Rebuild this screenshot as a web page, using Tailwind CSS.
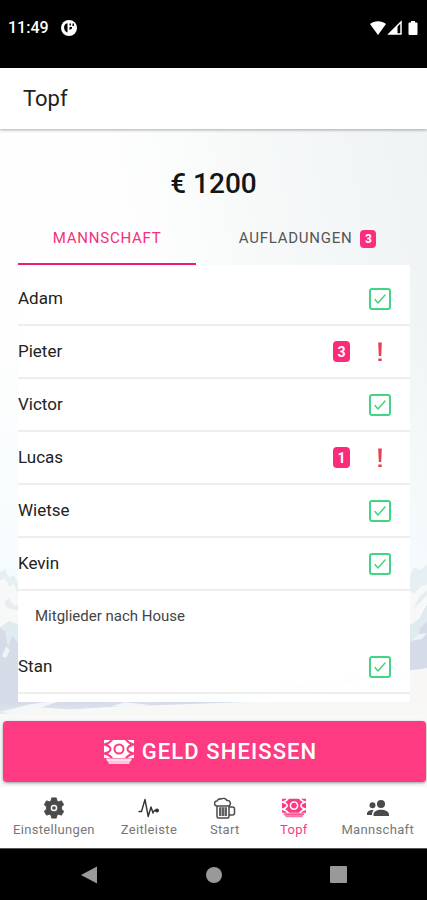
<!DOCTYPE html>
<html lang="de">

<head>
    <meta charset="UTF-8">
    <meta name="viewport" content="width=device-width, initial-scale=1.0">
    <script src="https://cdn.jsdelivr.net/npm/@tailwindcss/browser@4"></script>
    <title>Topf</title>
</head>

<body class="bg-white text-[#222] font-[Roboto,sans-serif] min-h-screen flex flex-col">
    <!-- status bar -->
    <div class="bg-black text-white h-17 px-2 pb-3 flex items-center gap-3">
        <span class="text-base font-medium">11:49</span>
        <svg class="size-4" viewBox="0 0 16 16">
            <circle cx="8" cy="8" r="8" fill="#fff" />
            <path d="M6.500 3.200C3.500 3.800 2.800 6 3.200 8.500S5 12.200 6.500 12.500z" fill="#000" />
            <path d="M8.500 3.500H10v2H8.500zM11.500 3.500H13v2.500h-1.500zM8.500 7H11v1.500L8.500 10z" fill="#000" />
        </svg>
        <div class="ml-auto flex items-center">
            <svg class="w-4 h-4" viewBox="0 0 16 16" fill="#fff"><path d="M0 4C4.500.2 11.500.2 16 4L8 15z" /></svg>
            <svg class="w-4 h-4 ml-px" viewBox="0 0 16 16"><path d="M14 2v12H2z" fill="none" stroke="#fff" stroke-width="1.500" /><path d="M10.500 5.500V14H2z" fill="#fff" /></svg>
            <svg class="w-3 h-4 ml-1" viewBox="0 0 12 16" fill="#fff"><path d="M4 1h4v1.500h1.500q1 0 1 1V14q0 1-1 1h-7q-1 0-1-1V3.500q0-1 1-1H4z" /></svg>
        </div>
    </div>

    <header class="h-[61px] px-[23px] flex items-center bg-white shadow-[0_1px_3px_#00000055] z-10">
        <h1 class="text-[22px]">Topf</h1>
    </header>

    <main class="relative flex-1 flex flex-col">
        <!-- mountain backdrop -->
        <svg class="absolute inset-0 w-full h-full" viewBox="0 0 427 659" preserveAspectRatio="none">
            <defs>
                <linearGradient id="sky" x1="0" y1="0.300" x2="1" y2="0">
                    <stop offset="0.300" stop-color="#fefefe" />
                    <stop offset="1" stop-color="#eef3f3" />
                </linearGradient>
                <linearGradient id="haze" x1="0" y1="0" x2="0" y2="1">
                    <stop offset="0.300" stop-color="#f5fbfd" stop-opacity="0" />
                    <stop offset="0.700" stop-color="#f5fbfd" />
                </linearGradient>
            </defs>
            <rect width="427" height="659" fill="url(#sky)" />
            <rect width="427" height="659" fill="url(#haze)" />
            <path d="M0 444 5 441 9 449 14 447 18 455V510H0zM410 447 414 439 420 442 427 436V520H410z" fill="#e5eff4" />
            <path d="M0 452 5 450 9 458 14 456 18 466V520H0zM410 462 414 466 421 458 427 456V490L410 500z" fill="#f7f8f8" />
            <path d="M4 474 9 470 14 478 18 476V482L8 480zM413 480 420 468 427 462V467L418 476z" fill="#e6edf1" />
            <path d="M0 499 8 504 13 496 18 500V572L150 574 427 540V477L418 493 410 502V573L240 574 110 579 0 586z" fill="#d5dce8" />
            <path d="M0 499 5 503 8 520 12 508 18 514V496L9 493zM410 497 420 490 427 478V493L420 500 418 510 410 514z" fill="#dfebf1" />
            <path d="M2 528 6 518 10 522 6 530zM412 512 419 506 427 505 421 511z" fill="#eef4f6" />
            <path d="M0 588 35 579 90 583 130 579 250 574 410 545 427 540V659H0z" fill="#f8f7f5" />
            <path d="M0 584 30 576 65 571 40 580 20 586zM112 578 125 574 150 577 130 580z" fill="#f3f6f9" />
        </svg>

        <div class="relative">
            <p class="text-[28px] font-medium text-center text-[#151515] h-[89px] pt-9 leading-[38px]">€ 1200</p>

            <div class="flex ml-[18px] mr-2 h-[47px] text-[15px] tracking-wider">
                <button class="flex-4 uppercase text-[#f5307c] border-b-2 border-[#ef1d70] pb-1">Mannschaft</button>
                <button class="flex-5 uppercase text-[#555] flex items-center justify-center gap-2 pb-1.5">
                    Aufladungen
                    <span class="bg-[#fa2e7c] text-white text-xs font-bold tracking-normal rounded w-4 h-[18px] grid place-items-center">3</span>
                </button>
            </div>

            <div class="ml-[18px] mr-[17px] py-2 bg-white/95">
                <ul id="members"></ul>
                <h2 class="h-[50px] pl-[17px] text-[15px] text-[#444] flex items-center">Mitglieder nach House</h2>
                <ul id="house-members"></ul>
            </div>
        </div>

        <div class="relative mt-auto pt-[18px] pb-[5px] pl-[3px] pr-px bg-linear-to-b from-transparent to-[#f7f9f9] to-30%">
            <button class="w-full h-[61px] rounded bg-[#fd3a82] text-white text-[22px] font-medium tracking-wider uppercase flex items-center justify-center gap-2 pr-2 shadow-[0_1px_3px_#00000066]">
                <svg class="w-[30px] h-6" viewBox="0 0 30 24"><use href="#cash" /></svg>
                Geld Sheissen
            </button>
        </div>
    </main>

    <nav class="h-[62px] bg-white flex text-[13px] tracking-wide text-[#777] border-b border-[#555]">
        <a href="#" class="flex-1 px-[13px] pt-2.5 flex flex-col items-center gap-px leading-5">
            <svg class="size-[22px]" viewBox="0 0 24 24" fill="#4a4a4a"><path fill-rule="evenodd" stroke="#4a4a4a" stroke-linejoin="round" d="M9.500 1h5l.7 3.200 1.800 1 3.100-1 2.500 4.300-2.400 2.200v2.600l2.400 2.200-2.500 4.300-3.100-1-1.800 1-.7 3.200h-5l-.7-3.200-1.800-1-3.100 1-2.500-4.300 2.400-2.200v-2.600L1.400 8.500l2.500-4.300 3.100 1 1.800-1zM12 7.800a4.200 4.200 0 1 0 0 8.400 4.200 4.200 0 0 0 0-8.400z" /><circle cx="12" cy="12" r="2" /></svg>
            Einstellungen
        </a>
        <a href="#" class="flex-1 px-[13px] pt-2.5 flex flex-col items-center gap-px leading-5">
            <svg class="size-[22px]" viewBox="0 0 22 22" fill="none" stroke="#333" stroke-width="1.400" stroke-linecap="round" stroke-linejoin="round"><path d="M1 14.500h2.500L7 2.500l3.200 17L13 10l2 6 1.300-2.500H19" /><circle cx="19" cy="13.500" r="1.300" fill="#333" /></svg>
            Zeitleiste
        </a>
        <a href="#" class="flex-1 px-[13px] pt-2.5 flex flex-col items-center gap-px leading-5">
            <svg class="size-[22px]" viewBox="0 0 22 22" fill="none" stroke="#4a4a4a" stroke-width="1.500" stroke-linejoin="round"><path d="M3 9v10.500q0 1.500 1.500 1.500h9q1.500 0 1.500-1.500V9zM15 10h3.500q2 0 2 2v4q0 2-2 2H15" /><path d="M3 9a2.500 2.500 0 0 1 0-5A3.500 3.500 0 0 1 7 2a4.500 4.500 0 0 1 6 1.500A3 3 0 0 1 15 9" /><path d="M5 10h8v9H5z" fill="#aaa" stroke="none" /><path d="M6 10.500v8.500M9 10.500v8.500M12 10.500v8.500" /></svg>
            Start
        </a>
        <a href="#" class="flex-1 px-[13px] pt-2.5 flex flex-col items-center gap-px leading-5 text-[#fb3a82]" aria-current="page">
            <svg class="w-6 h-[22px]" viewBox="0 0 30 24"><use href="#cash" /></svg>
            Topf
        </a>
        <a href="#" class="flex-1 px-[13px] pt-2.5 flex flex-col items-center gap-px leading-5">
            <svg class="size-[22px]" viewBox="0 0 22 22" fill="#4a4a4a"><circle cx="14" cy="7" r="4" /><path d="M6.500 19v-1.500c0-3 3.500-4.700 7.500-4.700s8 1.700 8 4.700V19z" /><circle cx="5.500" cy="8.200" r="3" /><path d="M0 18v-1c0-2.500 2.500-4 6.800-3.900C5.500 14.500 5 16 5 18z" /></svg>
            Mannschaft
        </a>
    </nav>

    <!-- system buttons -->
    <div class="h-[51px] bg-black flex items-center justify-between px-20">
        <button aria-label="Zurück"><svg class="size-[18px]" viewBox="0 0 18 18" fill="#999"><path d="M1 9 17 .5v17z" /></svg></button>
        <button class="size-4 rounded-full bg-[#999]" aria-label="Home"></button>
        <button class="size-[17px] rounded-[1px] bg-[#999]" aria-label="Übersicht"></button>
    </div>

    <svg class="hidden">
        <symbol id="cash" viewBox="0 0 30 24">
            <!-- note with a ring cut out and curved lines running to the corners -->
            <path fill="currentColor" fill-rule="evenodd" d="M9 0h12q1.500 2.500 5 4.500Q22.500 6.500 22.500 9t3.500 4.500q-3.500 2-5 4.500H9q-1.500-2.500-5-4.500Q7.500 11.500 7.500 9T4 4.500Q7.500 2.500 9 0zM15 3.500a5.500 5.500 0 1 0 0 11 5.500 5.500 0 0 0 0-11z" />
            <circle cx="15" cy="9" r="3.500" fill="currentColor" />
            <path fill="currentColor" d="M0 0h6.500Q4 3 0 3.500zM30 0h-6.500Q26 3 30 3.500zM0 18h6.500Q4 15 0 14.500zM30 18h-6.500Q26 15 30 14.500zM0 5.500Q5.500 7 5.500 9T0 12.500zM30 5.500Q24.500 7 24.500 9T30 12.500z" />
            <path fill="currentColor" opacity="0.850" d="M2 18.500h26L27 21H3z" />
            <path fill="currentColor" opacity="0.700" d="M3.500 21h23L25 24H5z" />
        </symbol>
    </svg>

    <script>
        const members = [
            { name: 'Adam', open: 0 },
            { name: 'Pieter', open: 3 },
            { name: 'Victor', open: 0 },
            { name: 'Lucas', open: 1 },
            { name: 'Wietse', open: 0 },
            { name: 'Kevin', open: 0 },
        ];
        const houseMembers = [{ name: 'Stan', open: 0 }];

        const paid = `
            <span class="grid size-[22px] ml-auto">
                <input type="checkbox" checked class="appearance-none col-start-1 row-start-1 size-[22px] rounded-[3px] border-2 border-[#42d583]">
                <svg class="col-start-1 row-start-1 size-[22px] pointer-events-none" viewBox="0 0 22 22" fill="none" stroke="#42d583" stroke-width="1.500" stroke-linecap="round" stroke-linejoin="round"><path d="m6 11.500 3 3.500 7-8" /></svg>
            </span>`;

        const due = (count) => `
            <span class="ml-auto bg-[#fb2b7a] text-white text-sm leading-4 font-bold rounded w-[17px] h-[21px] grid place-items-center">${count}</span>
            <svg class="size-[22px] ml-[19px]" viewBox="0 0 22 22" fill="#e83e4d"><path d="M9.200 1.500h3.600l-.6 13.500H9.800z" /><path d="M9.300 17.500h3.400V20H9.300z" /></svg>`;

        const renderList = (id, list) => {
            document.getElementById(id).innerHTML = list.map(member => `
                <li class="border-b-2 border-[#eee]">
                    <label class="h-[51px] pr-[19px] flex items-center text-[17px]">${member.name}${member.open ? due(member.open) : paid}</label>
                </li>`).join('');
        };

        renderList('members', members);
        renderList('house-members', houseMembers);
    </script>
</body>

</html>
